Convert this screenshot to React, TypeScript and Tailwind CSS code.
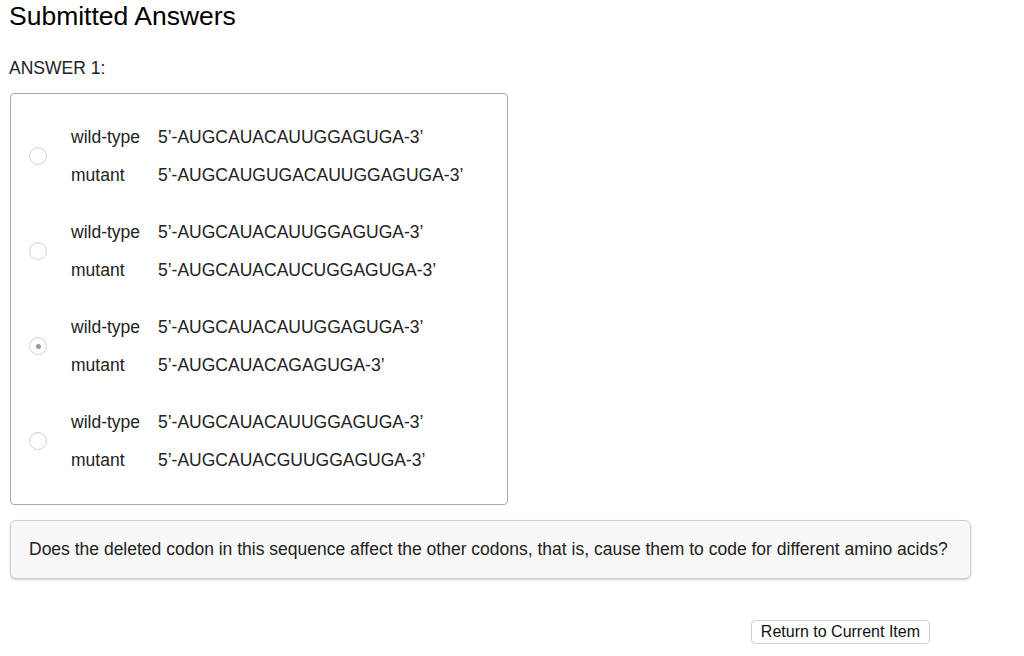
import React from "react";

const options = [
  { wt: "5’-AUGCAUACAUUGGAGUGA-3’", mut: "5’-AUGCAUGUGACAUUGGAGUGA-3’", checked: false },
  { wt: "5’-AUGCAUACAUUGGAGUGA-3’", mut: "5’-AUGCAUACAUCUGGAGUGA-3’", checked: false },
  { wt: "5’-AUGCAUACAUUGGAGUGA-3’", mut: "5’-AUGCAUACAGAGUGA-3’", checked: true },
  { wt: "5’-AUGCAUACAUUGGAGUGA-3’", mut: "5’-AUGCAUACGUUGGAGUGA-3’", checked: false },
];

function Radio({ checked }: { checked: boolean }) {
  return (
    <div className="w-[18px] h-[18px] rounded-full border border-[#d4d4d4] bg-white flex items-center justify-center shadow-[inset_0_1px_1px_rgba(0,0,0,0.05)]">
      {checked && <div className="w-[5px] h-[5px] rounded-full bg-[#9a9a9a]" />}
    </div>
  );
}

export default function App() {
  return (
    <div className="bg-white min-h-[656px] w-[1024px] text-[#222]" style={{ fontFamily: '"Liberation Sans", Arial, sans-serif' }}>
      <div className="pl-[9px] pt-[1px]">
        <h1 className="text-[26.5px] leading-[30px] text-black">Submitted Answers</h1>
        <div className="mt-[27px] text-[17.5px] leading-[20px] text-[#222]">ANSWER 1:</div>
      </div>
      <div className="ml-[10px] mt-[15px] w-[498px] border border-[#aaaaaa] rounded-[4px] pl-[18px] pt-[24px] pb-[25px] flex flex-col gap-[19px]">
        {options.map((o, i) => (
          <div key={i} className="flex items-center">
            <Radio checked={o.checked} />
            <div className="ml-[24px] flex flex-col text-[17.5px] text-[#222]">
              <div className="flex h-[38px] items-center">
                <span className="w-[87px]">wild-type</span>
                <span>{o.wt}</span>
              </div>
              <div className="flex h-[38px] items-center">
                <span className="w-[87px]">mutant</span>
                <span>{o.mut}</span>
              </div>
            </div>
          </div>
        ))}
      </div>
      <div className="ml-[10px] mt-[15px] w-[961px] h-[59px] border border-[#cfcfcf] rounded-[6px] bg-[#f8f8f8] shadow-[0_1px_2px_rgba(0,0,0,0.2)] flex items-center pl-[18px] text-[17.5px] text-[#222]">
        Does the deleted codon in this sequence affect the other codons, that is, cause them to code for different amino acids?
      </div>
      <div className="w-[930px] flex justify-end mt-[41px]">
        <button className="h-[24px] px-[9px] border border-[#cfcfcf] rounded-[4px] bg-white text-[16px] text-[#111] leading-none" style={{ fontFamily: '"Liberation Sans", Arial, sans-serif' }}>
          Return to Current Item
        </button>
      </div>
    </div>
  );
}
